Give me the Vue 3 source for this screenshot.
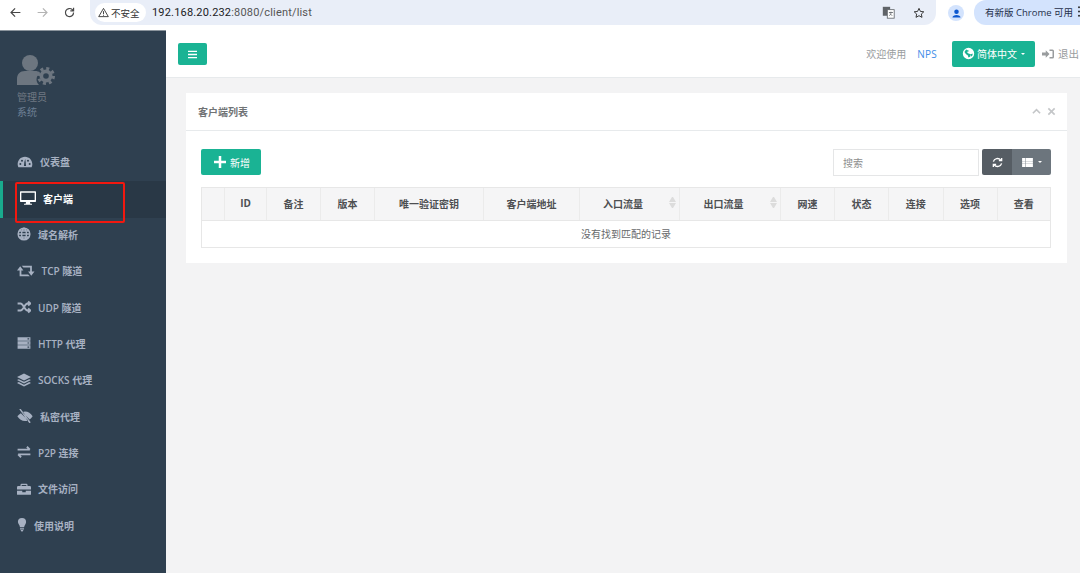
<script setup>
import { ref } from 'vue'

const menu = ref([
  { label: '仪表盘', w: 16, view: '0 3 24 18', fill: 'M12 4C5.400 4 1 9.400 1 15.500c0 1.700.4 3.200 1.100 4.500h19.800c.7-1.300 1.100-2.800 1.100-4.500C23 9.400 18.600 4 12 4zM5 16.500a1.500 1.500 0 1 1 0-3 1.500 1.500 0 0 1 0 3zm2.500-5a1.500 1.500 0 1 1 0-3 1.500 1.500 0 0 1 0 3zM13.600 18h-3.200l.6-6 1.400-4.500.6 4.500zM16.500 11.500a1.500 1.500 0 1 1 0-3 1.500 1.500 0 0 1 0 3zm2.500 5a1.500 1.500 0 1 1 0-3 1.500 1.500 0 0 1 0 3z' },
  { label: '客户端', w: 16, active: true, view: '0 3 24 20', fill: 'M1 3h22a1 1 0 0 1 1 1v14a1 1 0 0 1-1 1h-8l.5 2.500H18V23H6v-1.500h2.500L9 19H1a1 1 0 0 1-1-1V4a1 1 0 0 1 1-1zm1 2v11h20V5z' },
  { label: '域名解析', w: 14, stroke: 'M12 2a10 10 0 1 0 0 20 10 10 0 0 0 0-20zM2 12h20M3.500 7h17M3.500 17h17M12 2c-6 5-6 15 0 20M12 2c6 5 6 15 0 20' },
  { label: 'TCP 隧道', w: 17.5, view: '0 0 30 24', fill: 'M5.500 4 11 11H7.500v7H19l3 3H4.500V11H0zM24.500 20 19 13h3.500V6H11L8 3h17.500v10H30z' },
  { label: 'UDP 隧道', w: 14, stroke: 'M1 6h5c5 0 7 12 12 12h3M1 18h5c5 0 7-12 12-12h3M19 2.500 23 6l-4 3.500M19 14.500l4 3.500-4 3.500', heavy: true },
  { label: 'HTTP 代理', w: 14, fill: 'M1 2h22v6H1zM1 9h22v6H1zM1 16h22v6H1zM18 4v2h3V4zM18 11v2h3v-2zM18 18v2h3v-2z' },
  { label: 'SOCKS 代理', w: 14, fill: 'M12 1 24 7 12 13 0 7zM3 10.500 12 15l9-4.500 3 1.500-12 6-12-6zM3 15.500 12 20l9-4.500 3 1.500-12 6-12-6z' },
  { label: '私密代理', w: 16, view: '0 1 24 22', fill: 'M12 5c5 0 9 3 12 7.500-1.200 2-2.800 3.700-4.600 5L8 6c1.300-.6 2.600-1 4-1zM5.500 7.500 17 19c-1.500.7-3.200 1-5 1-5 0-9-3-12-7.500C1.300 10.500 3.200 8.800 5.500 7.500zM3 1.500 5 .5 21 22l-2 1.500z' },
  { label: 'P2P 连接', w: 14, stroke: 'M1 8h21M17 3l5 5M23 16H2M7 21l-5-5', heavy: true },
  { label: '文件访问', w: 14, fill: 'M8 3h8a2 2 0 0 1 2 2v2h4a2 2 0 0 1 2 2v4H0V9a2 2 0 0 1 2-2h4V5a2 2 0 0 1 2-2zm0 2v2h8V5zM0 15h9v2.500h6V15h9v6a1 1 0 0 1-1 1H1a1 1 0 0 1-1-1z' },
  { label: '使用说明', w: 10, view: '0 0 14 24', fill: 'M7 0a7 7 0 0 1 7 7c0 3.500-2.500 5-3.500 9h-7C3.500 12 0 10.500 0 7a7 7 0 0 1 7-7zM3.500 17.500h7v2h-7zM4.500 20.500h5L8 23H6z' }
])

const columns = ref([
  { label: '', w: 23 },
  { label: 'ID', w: 42 },
  { label: '备注', w: 54 },
  { label: '版本', w: 54 },
  { label: '唯一验证密钥', w: 109 },
  { label: '客户端地址', w: 96 },
  { label: '入口流量', w: 100, sort: true },
  { label: '出口流量', w: 101, sort: true },
  { label: '网速', w: 54 },
  { label: '状态', w: 54 },
  { label: '连接', w: 54.5 },
  { label: '选项', w: 54 },
  { label: '查看', w: 52.5 }
])
</script>

<template>
  <div class="page">
    <header class="chrome">
      <div class="chrome-nav">
        <svg class="c-icon" viewBox="0 0 16 16"><path d="M14 8H3M7.500 3 2.500 8l5 5" /></svg>
        <svg class="c-icon off" viewBox="0 0 16 16"><path d="M2 8h11M8.500 3l5 5-5 5" /></svg>
        <svg class="c-icon" viewBox="0 0 16 16"><path d="M13 8a5 5 0 1 1-1.500-3.500L13 6M13 2v4H9" /></svg>
      </div>
      <div class="omnibox">
        <div class="secure">
          <svg class="warn" viewBox="0 0 16 16"><path d="M8 2 15 14H1zM8 6v4.500M8 11.500v1.200" /></svg>
          <span>不安全</span>
        </div>
        <div class="url">192.168.20.232<span class="url-dim">:8080/client/list</span></div>
        <div class="omni-right">
          <svg class="translate" viewBox="0 0 16 16">
            <rect x="1" y="1" width="9" height="11" fill="#5f6368" />
            <rect x="6.500" y="4.500" width="8.500" height="10.500" fill="#fff" stroke="#5f6368" />
            <path d="M8.500 8h5M11 7v1c0 2-1 3-2 4M10 9.500l2.500 2.500M3 8l1.800-4.500L6 6.500" fill="none" stroke="#5f6368" />
          </svg>
          <svg class="star" viewBox="0 0 16 16"><path d="m8 1.800 1.900 4.100 4.500.5-3.300 3 .9 4.400L8 11.600l-4 2.200.9-4.400-3.300-3 4.500-.5z" /></svg>
        </div>
      </div>
      <div class="avatar">
        <svg viewBox="0 0 16 16"><path d="M8 3a2.800 2.800 0 1 1 0 5.600A2.800 2.800 0 0 1 8 3zM3 13c0-2.200 2.500-3.300 5-3.300s5 1.100 5 3.300z" /></svg>
      </div>
      <div class="update">
        有新版 Chrome 可用
        <svg class="dots" viewBox="0 0 4 14"><circle cx="2" cy="2.500" r="1.100" /><circle cx="2" cy="7" r="1.100" /><circle cx="2" cy="11.500" r="1.100" /></svg>
      </div>
    </header>

    <div class="body">
      <aside class="sidebar">
        <div class="profile">
          <svg class="profile-icon" viewBox="0 0 38 30">
            <circle cx="13" cy="8" r="8" fill="#6d7680" />
            <path d="M0 30v-6c0-5 3-8 8-8h10c2 0 4 .5 5 1.500-2 2-3.500 4-3.500 7 0 2 1 4 2.500 5.500z" fill="#6d7680" />
            <circle cx="29" cy="21" r="6.500" fill="#6d7680" />
            <circle cx="29" cy="21" r="7.500" fill="none" stroke="#6d7680" stroke-width="3" stroke-dasharray="3 2.890" />
            <circle cx="29" cy="21" r="2.800" fill="#2f4050" />
          </svg>
          <div class="role">管理员</div>
          <div class="sys">系统</div>
        </div>
        <nav class="menu">
          <a v-for="item in menu" :key="item.label" class="menu-item" :class="{ active: item.active }">
            <svg class="menu-icon" :style="{ width: item.w + 'px' }" :viewBox="item.view || '0 0 24 24'">
              <path v-if="item.fill" :d="item.fill" fill-rule="evenodd" />
              <path v-if="item.stroke" :d="item.stroke" class="line" :class="{ heavy: item.heavy }" />
            </svg>
            <span>{{ item.label }}</span>
          </a>
        </nav>
        <div class="mark"></div>
      </aside>

      <main class="main">
        <div class="topnav">
          <button class="btn toggle">
            <svg viewBox="0 0 10 10" class="bars"><path d="M0 1.500h10M0 5h10M0 8.500h10" /></svg>
          </button>
          <div class="top-right">
            <span class="welcome">欢迎使用</span>
            <a class="nps">NPS</a>
            <button class="btn lang">
              <svg viewBox="0 0 16 16" class="globe">
                <path fill-rule="evenodd" d="M8 1a7 7 0 1 1 0 14A7 7 0 0 1 8 1zM5 3 3 6l2 3 2 1 1 3 2-1 1-3-3-1-2-2 3-1zm6 6 2-1 0 2-2 2z" />
              </svg>
              简体中文<i class="caret"></i>
            </button>
            <a class="logout">
              <svg viewBox="0 0 16 16" class="logout-icon">
                <path d="M0 6h5V3l5 5-5 5v-3H0zM10 2h4a2 2 0 0 1 2 2v8a2 2 0 0 1-2 2h-4v-2h4V4h-4z" />
              </svg>
              退出
            </a>
          </div>
        </div>

        <section class="card">
          <div class="card-title">
            <h5>客户端列表</h5>
            <div class="card-tools">
              <svg viewBox="0 0 10 10"><path d="M1 7l4-4 4 4" /></svg>
              <svg viewBox="0 0 10 10"><path d="M1.500 1.500l7 7M8.500 1.500l-7 7" /></svg>
            </div>
          </div>
          <div class="card-body">
            <div class="toolbar">
              <button class="btn add">
                <svg viewBox="0 0 12 12" class="plus"><path d="M6 0v12M0 6h12" /></svg>
                新增
              </button>
              <div class="tools">
                <div class="search">搜索</div>
                <div class="btn-group">
                  <button class="btn refresh">
                    <svg viewBox="0 0 12 12" class="sync"><path d="M1.500 5a4.500 4.500 0 0 1 8-1.500M10.500 7a4.500 4.500 0 0 1-8 1.500M10.500 1v3h-3M1.500 11V8h3" /></svg>
                  </button>
                  <button class="btn cols">
                    <svg viewBox="0 0 12 10" class="grid"><path fill-rule="evenodd" d="M0 0h12v10H0zM4 3.200v.5h8v-.5zM4 6.300v.5h8v-.5zM3.400 0v10h.5V0zM0 3.200v.5h3.400v-.5zM0 6.300v.5h3.400v-.5z" /></svg>
                    <i class="caret"></i>
                  </button>
                </div>
              </div>
            </div>
            <div class="table">
              <div class="thead">
                <div v-for="(col, i) in columns" :key="i" class="th" :class="{ sortable: col.sort }" :style="{ width: col.w + 'px' }">
                  {{ col.label }}
                  <span v-if="col.sort" class="sort"><i class="up"></i><i class="down"></i></span>
                </div>
              </div>
              <div class="empty">没有找到匹配的记录</div>
            </div>
          </div>
        </section>
      </main>
    </div>
  </div>
</template>

<style>
html, body { margin: 0; overflow: hidden; }
</style>

<style scoped>
* { box-sizing: border-box; }
.page {
  width: 1080px; height: 573px; display: flex; flex-direction: column; overflow: hidden;
  font-family: "Open Sans", "Noto Sans CJK SC", sans-serif; font-size: 10px; color: #676a6c;
  position: relative;
}
button { font-family: inherit; border: 0; padding: 0; }

.chrome { height: 30px; flex: none; background: #fff; display: flex; align-items: flex-start; }
.chrome-nav { width: 90px; height: 25px; display: flex; align-items: center; padding-left: 9px; gap: 14px; flex: none; }
.c-icon { width: 13px; height: 13px; fill: none; stroke: #474747; stroke-width: 1.500; }
.c-icon.off { stroke: #b4b4b4; }
.omnibox { width: 846px; height: 25px; background: #e9eef8; border-radius: 0 0 12px 12px; display: flex; align-items: center; padding-left: 5px; flex: none; }
.secure { width: 51px; height: 19px; background: #fff; border-radius: 10px; display: flex; align-items: center; padding-left: 3px; gap: 2px; font-size: 9.500px; color: #333; flex: none; }
.warn { width: 11px; height: 11px; fill: none; stroke: #333; stroke-width: 1.300; }
.url { margin-left: 6px; font-size: 11px; color: #202124; font-family: "Roboto", "Open Sans", sans-serif; letter-spacing: .18px; }
.url-dim { color: #555; }
.omni-right { margin-left: auto; display: flex; align-items: center; gap: 18px; padding-right: 11px; }
.translate { width: 13px; height: 13px; }
.star { width: 12px; height: 12px; fill: none; stroke: #333; stroke-width: 1.300; }
.avatar { width: 16px; height: 16px; margin: 5px 0 0 12px; border-radius: 50%; background: #d3e3fd; display: flex; align-items: center; justify-content: center; flex: none; }
.avatar svg { width: 13px; height: 13px; fill: #0b57d0; }
.update { margin-left: 10px; width: 120px; height: 25px; flex: none; background: #d3e3fd; border-radius: 12px 0 0 12px; display: flex; align-items: center; padding: 0 0 2px 11px; font-size: 9.500px; color: #1f2f4a; white-space: nowrap; gap: 3px; }
.dots { width: 4px; height: 13px; flex: none; fill: #333; margin-left: 1px; }

.body { flex: 1; display: flex; min-height: 0; }
.sidebar { width: 166px; flex: none; background: #2f4050; border-top: 1px solid #8b949c; position: relative; }
.profile { height: 114px; padding: 24px 0 0 17px; }
.profile-icon { width: 38px; height: 30px; display: block; }
.role { margin-top: 5px; line-height: 14px; color: #6f7882; }
.sys { margin-top: 1px; line-height: 15px; color: #6c7f94; }
.menu { display: flex; flex-direction: column; }
.menu-item { height: 36.350px; flex: none; display: flex; align-items: center; gap: 7px; padding: 0 0 3px 17px; color: #a7b1c2; font-weight: 600; white-space: nowrap; }
.menu-icon { height: 14px; fill: #a7b1c2; flex: none; }
.line { fill: none; stroke: #a7b1c2; stroke-width: 2.500; }
.line.heavy { stroke-width: 3.200; }
.menu-item.active { background: #293846; border-left: 3px solid #19aa8d; color: #fff; }
.menu-item.active .menu-icon { fill: #fff; }

.main { flex: 1; min-width: 0; background: #f3f3f4; }
.topnav { height: 48px; background: #fff; border-bottom: 1px solid #e7eaec; display: flex; align-items: center; padding-left: 12px; }
.btn { display: flex; align-items: center; justify-content: center; color: #fff; border-radius: 2px; }
.toggle { width: 29px; height: 22px; background: #1ab394; margin-top: 1px; }
.bars { width: 9px; height: 9px; stroke: #fff; stroke-width: 1.500; fill: none; }
.top-right { margin-left: auto; display: flex; align-items: center; height: 100%; margin-right: 1px; }
.welcome { color: #999c9e; }
.nps { margin-left: 11px; color: #3f8ee8; letter-spacing: .2px; }
.lang { margin-left: 15px; width: 83px; height: 26px; background: #1ab394; font-size: 10px; gap: 2px; }
.globe { width: 13px; height: 13px; fill: #fff; }
.caret { display: inline-block; margin-left: 2px; border: 2.500px solid transparent; border-top-color: #fff; border-bottom: 0; }
.logout { margin-left: 7px; display: flex; align-items: center; gap: 4px; color: #999c9e; font-size: 10.500px; }
.logout-icon { width: 12px; height: 12px; fill: #999c9e; }

.card { margin: 15px 13px 0 20px; background: #fff; height: 170px; }
.card-title { height: 38px; border-bottom: 1px solid #e7eaec; display: flex; align-items: center; padding: 0 11px 0 12px; }
.card-title h5 { margin: 0; font-size: 10px; font-weight: 600; color: #707375; }
.card-tools { margin-left: auto; display: flex; gap: 6px; }
.card-tools svg { width: 9px; height: 9px; fill: none; stroke: #c4c6c8; stroke-width: 1.800; }
.card-body { padding: 18px 16px 0 15px; }
.toolbar { display: flex; justify-content: space-between; align-items: flex-start; height: 38px; }
.add { width: 60px; height: 26px; background: #1ab394; gap: 4px; font-size: 10px; padding-left: 2px; }
.plus { width: 12px; height: 12px; stroke: #fff; stroke-width: 2.500; fill: none; }
.tools { display: flex; gap: 3px; }
.search { width: 146px; height: 27px; border: 1px solid #e5e6e7; display: flex; align-items: center; padding-left: 9px; color: #8e8e8e; font-size: 10px; }
.btn-group { display: flex; height: 26px; }
.refresh { width: 30px; background: #565d64; border-radius: 2px 0 0 2px; }
.sync { width: 11px; height: 11px; fill: none; stroke: #fff; stroke-width: 1.500; }
.cols { width: 39px; background: #6c757d; border-radius: 0 2px 2px 0; gap: 3px; }
.grid { width: 11px; height: 9px; fill: #fff; }

.table { border: 1px solid #e7e7e7; width: 850px; }
.thead { display: flex; height: 33px; background: #f5f5f6; border-bottom: 1px solid #e7e7e7; }
.th { flex: none; display: flex; align-items: center; justify-content: center; font-weight: 700; color: #4d4f52; border-right: 1px solid #ebebeb; position: relative; padding-bottom: 2px; }
.th.sortable { padding-right: 13px; }
.th:last-child { border-right: 0; }
.sort { position: absolute; right: 3px; top: 9px; display: flex; flex-direction: column; gap: 1px; }
.up, .down { display: block; width: 7px; height: 5px; border-left: 3.500px solid transparent; border-right: 3.500px solid transparent; }
.up { border-bottom: 5px solid #dcdcdc; }
.down { border-top: 5px solid #dcdcdc; }
.empty { height: 26px; display: flex; align-items: center; justify-content: center; color: #676a6c; padding-bottom: 1px; }

.mark { position: absolute; left: 15px; top: 151px; width: 110px; height: 41px; border: 2px solid #f2180f; border-radius: 2px; }
</style>
